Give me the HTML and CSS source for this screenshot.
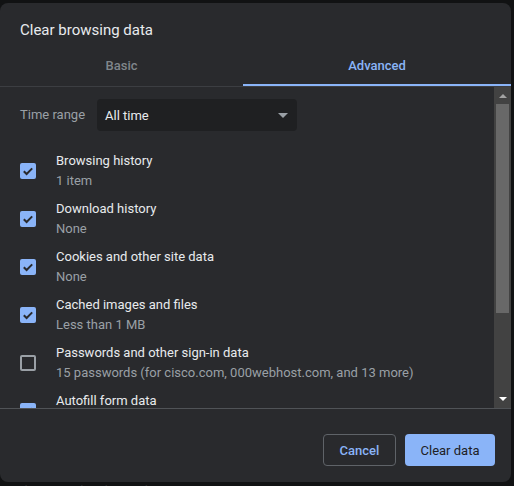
FILE: index.html
```html
<!DOCTYPE html>
<html>
<head>
<meta charset="utf-8">
<link rel="stylesheet" href="styles.css">
</head>
<body>
<div class="dialog">
  <div class="title">Clear browsing data</div>
  <div class="tabs">
    <div class="tab">Basic</div>
    <div class="tab active">Advanced</div>
  </div>
  <div class="body">
    <div class="list">
      <div class="range">
        <span class="range-label">Time range</span>
        <div class="select">
          <span>All time</span>
          <span class="caret"></span>
        </div>
      </div>
      <div class="item">
        <span class="box checked"><svg viewBox="0 0 16 16" width="16" height="16"><path d="M3.8 8.2 L6.6 11 L12.2 5.4" fill="none" stroke="#292a2d" stroke-width="2"/></svg></span>
        <div class="text"><div class="label">Browsing history</div><div class="sub">1 item</div></div>
      </div>
      <div class="item">
        <span class="box checked"><svg viewBox="0 0 16 16" width="16" height="16"><path d="M3.8 8.2 L6.6 11 L12.2 5.4" fill="none" stroke="#292a2d" stroke-width="2"/></svg></span>
        <div class="text"><div class="label">Download history</div><div class="sub">None</div></div>
      </div>
      <div class="item">
        <span class="box checked"><svg viewBox="0 0 16 16" width="16" height="16"><path d="M3.8 8.2 L6.6 11 L12.2 5.4" fill="none" stroke="#292a2d" stroke-width="2"/></svg></span>
        <div class="text"><div class="label">Cookies and other site data</div><div class="sub">None</div></div>
      </div>
      <div class="item">
        <span class="box checked"><svg viewBox="0 0 16 16" width="16" height="16"><path d="M3.8 8.2 L6.6 11 L12.2 5.4" fill="none" stroke="#292a2d" stroke-width="2"/></svg></span>
        <div class="text"><div class="label">Cached images and files</div><div class="sub">Less than 1 MB</div></div>
      </div>
      <div class="item">
        <span class="box"></span>
        <div class="text"><div class="label">Passwords and other sign-in data</div><div class="sub">15 passwords (for cisco.com, 000webhost.com, and 13 more)</div></div>
      </div>
      <div class="item">
        <span class="box checked"><svg viewBox="0 0 16 16" width="16" height="16"><path d="M3.8 8.2 L6.6 11 L12.2 5.4" fill="none" stroke="#292a2d" stroke-width="2"/></svg></span>
        <div class="text"><div class="label">Autofill form data</div><div class="sub">None</div></div>
      </div>
    </div>
    <div class="scrollbar">
      <span class="arrow up"></span>
      <div class="track"><div class="thumb"></div></div>
      <span class="arrow down"></span>
    </div>
  </div>
  <div class="footer">
    <button class="btn cancel">Cancel</button>
    <button class="btn primary">Clear data</button>
  </div>
</div>
<div class="behind">Clear saved Web Site data</div>
</body>
</html>
```
FILE: styles.css
```css
html, body {
  margin: 0;
  padding: 0;
  background: #111213;
  font-family: Roboto, "Liberation Sans", sans-serif;
  overflow: hidden;
  height: 486px;
}
.dialog {
  margin-top: 3px;
  width: 511px;
  height: 479px;
  background: #292a2d;
  border-radius: 8px;
  display: flex;
  flex-direction: column;
  overflow: hidden;
}
.title {
  padding: 17px 20px 0;
  font-size: 15px;
  line-height: 20px;
  color: #e8eaed;
}
.tabs {
  display: flex;
  border-bottom: 1px solid #3c3e42;
}
.tab {
  flex: 0 0 243px;
  text-align: center;
  font-size: 13px;
  font-weight: 500;
  line-height: 18px;
  padding: 17px 0 9px;
  color: #80868b;
  border-bottom: 2px solid transparent;
}
.tab.active {
  flex: 1;
  color: #8ab4f8;
  border-bottom-color: #8ab4f8;
}
.body {
  height: 321px;
  display: flex;
  border-bottom: 1px solid #505357;
}
.list {
  flex: 1;
  overflow: hidden;
  padding: 12px 0 0 20px;
}
.range {
  display: flex;
  align-items: center;
  gap: 10px;
  height: 32px;
}
.range-label {
  font-size: 13px;
  line-height: 18px;
  color: #9aa0a6;
  width: 67px;
  margin-top: -1px;
}
.select {
  width: 184px;
  height: 32px;
  background: #1f2022;
  border-radius: 4px;
  display: flex;
  align-items: center;
  justify-content: space-between;
  padding: 0 8px;
  font-size: 13px;
  color: #e8eaed;
}
.caret {
  width: 0;
  height: 0;
  border-left: 5px solid transparent;
  border-right: 5px solid transparent;
  border-top: 5px solid #9aa0a6;
  margin-right: 1px;
}
.item {
  display: flex;
  align-items: center;
  gap: 20px;
  height: 48px;
}
.range + .item {
  margin-top: 16px;
}
.box {
  width: 16px;
  height: 16px;
  box-sizing: border-box;
  border: 2px solid #9aa0a6;
  border-radius: 2px;
  flex: none;
  display: block;
}
.box.checked {
  border: none;
  background: #8ab4f8;
}
.box svg { display: block; }
.text {
  font-size: 13px;
  line-height: 20px;
}
.label { color: #e8eaed; }
.sub { color: #9aa0a6; }
.scrollbar {
  width: 17px;
  background: #424242;
  display: flex;
  flex-direction: column;
  align-items: center;
}
.track {
  flex: 1;
  width: 13px;
}
.thumb {
  width: 13px;
  height: 209px;
  background: #686868;
}
.arrow {
  width: 0;
  height: 0;
  border-left: 4px solid transparent;
  border-right: 4px solid transparent;
}
.arrow.up {
  border-bottom: 4px solid #a3a3a3;
  margin: 7px 0 6px;
}
.arrow.down {
  border-top: 4px solid #ffffff;
  margin: 6px 0 7px;
}
.footer {
  display: flex;
  justify-content: flex-end;
  gap: 9px;
  padding: 25px 16px 0;
}
.btn {
  height: 32px;
  border-radius: 4px;
  font-family: Roboto, "Liberation Sans", sans-serif;
  font-size: 13px;
  font-weight: 500;
  padding: 0;
}
.cancel {
  width: 73px;
  background: transparent;
  border: 1px solid #5f6368;
  color: #8ab4f8;
}
.primary {
  width: 90px;
  background: #8ab4f8;
  border: none;
  color: #202124;
  font-weight: 400;
}
.behind {
  padding: 1px 0 0 16px;
  font-size: 13px;
  color: #2e2f31;
}
```
